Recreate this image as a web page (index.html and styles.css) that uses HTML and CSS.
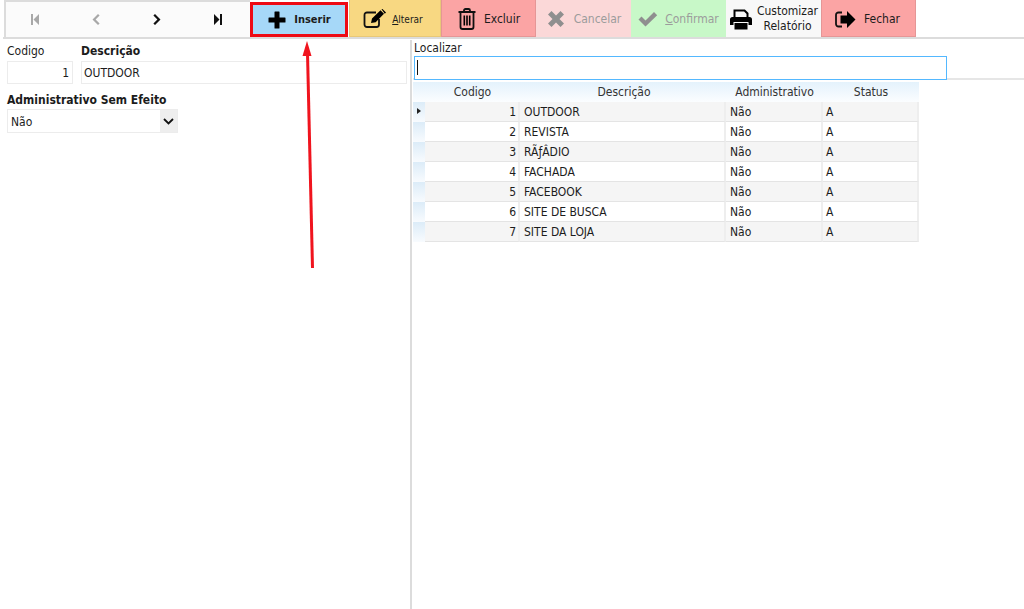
FILE: index.html
```html
<!DOCTYPE html>
<html lang="pt-BR">
<head>
<meta charset="utf-8">
<title>Cadastro</title>
<link rel="stylesheet" href="styles.css">
</head>
<body>
<div class="app">
  <div class="toolbar">
    <div class="nav">
      <button class="navbtn off"><svg width="10" height="11" viewBox="0 0 10 11"><path d="M1 0h2v11H1zM9 0v11L3.500 5.500z"/></svg></button>
      <button class="navbtn off"><svg width="8" height="11" viewBox="0 0 8 11"><path d="M6 0l1.600 1.600L3.600 5.500l4 3.900L6 11 .5 5.500z"/></svg></button>
      <button class="navbtn"><svg width="8" height="11" viewBox="0 0 8 11"><path d="M2 0L.4 1.600l4 3.900-4 3.900L2 11l5.500-5.500z"/></svg></button>
      <button class="navbtn"><svg width="10" height="11" viewBox="0 0 10 11"><path d="M9 0H7v11h2zM1 0v11l5.500-5.500z"/></svg></button>
    </div>
    <button class="btn insert"><svg width="18" height="18" viewBox="0 0 18 18"><path d="M7 .5h4a.5.5 0 0 1 .5.5v5.500H17a.5.5 0 0 1 .5.5v4a.5.5 0 0 1-.5.5h-5.500V17a.5.5 0 0 1-.5.5H7a.5.5 0 0 1-.5-.5v-5.500H1a.5.5 0 0 1-.5-.5V7a.5.5 0 0 1 .5-.5h5.500V1a.5.5 0 0 1 .5-.5z"/></svg><span>Inserir</span></button>
    <button class="btn edit"><svg width="24" height="20" viewBox="0 0 24 20"><path d="M16 10v5.500a2.500 2.500 0 0 1-2.500 2.500H4a2.500 2.500 0 0 1-2.500-2.500V6A2.500 2.500 0 0 1 4 3.500h9" fill="none" stroke="#111" stroke-width="1.800"/><path d="M8 14l1-4.500L17.500 1.200 21 4.700 12.700 13.200zM18.500.3l1-.3 3.500 3.500-1.200 1.200z"/></svg><span><u>A</u>lterar</span></button>
    <button class="btn del"><svg width="18" height="22" viewBox="0 0 18 22"><path d="M.5 4h17M6 4V2.500A1.500 1.500 0 0 1 7.500 1h3A1.500 1.500 0 0 1 12 2.500V4M2.500 4v15a2 2 0 0 0 2 2h9a2 2 0 0 0 2-2V4" fill="none" stroke="#111" stroke-width="1.800"/><path d="M5.500 7.500h1.600v10H5.500zM8.200 7.500h1.600v10H8.200zM10.900 7.500h1.600v10h-1.600z"/></svg><span>Excluir</span></button>
    <button class="btn cancel dim"><svg width="18" height="18" viewBox="0 0 18 18"><path d="M1 4.500L4.500 1 9 5.500 13.500 1 17 4.500 12.500 9l4.500 4.500-3.500 3.500L9 12.500 4.500 17 1 13.500 5.500 9z" fill="#8f8f8f"/></svg><span>Cancelar</span></button>
    <button class="btn ok dim"><svg width="20" height="16" viewBox="0 0 20 16"><path d="M.5 8.500l3-3 4 4L16 1l3.200 3.200L7.500 15.500z" fill="#8f8f8f"/></svg><span><u>C</u>onfirmar</span></button>
    <button class="btn report"><svg width="22" height="21" viewBox="0 0 22 21"><path d="M4.500 8V1.500h10L17.500 4.500V8" fill="none" stroke="#000" stroke-width="2"/><path d="M2.500 8h17A2.500 2.500 0 0 1 22 10.500V16h-3.500v-3h-15v3H0v-5.500A2.500 2.500 0 0 1 2.500 8zM4.500 14h13v6.500h-13z"/></svg><span class="two">Customizar<br>Relatório</span></button>
    <button class="btn close"><svg width="21" height="17" viewBox="0 0 21 17"><path d="M7 1.500H3.500A2.500 2.500 0 0 0 1 4v9a2.500 2.500 0 0 0 2.500 2.500H7" fill="none" stroke="#111" stroke-width="1.800"/><path d="M12 0l8.500 8.500L12 17v-4.500H5.500v-8H12z"/></svg><span>Fechar</span></button>
  </div>
  <div class="panes">
    <section class="left">
      <div class="fields">
        <div class="field code"><label>Codigo</label><div class="input num">1</div></div>
        <div class="field desc"><label class="bold">Descrição</label><div class="input">OUTDOOR</div></div>
      </div>
      <label class="bold admin">Administrativo Sem Efeito</label>
      <div class="select"><span>Não</span><i><svg width="11" height="7" viewBox="0 0 11 7"><path d="M1 1l4.500 4.500L10 1" fill="none" stroke="#111" stroke-width="1.800"/></svg></i></div>
    </section>
    <section class="right">
      <div class="search">
        <label>Localizar</label>
        <div class="find"><b class="caret"></b></div>
      </div>
      <div class="grid">
        <div class="head"><span class="ind"></span><span>Codigo</span><span class="hd">Descrição</span><span>Administrativo</span><span>Status</span></div>
        <div class="row odd"><span class="ind cur"></span><span class="n">1</span><span>OUTDOOR</span><span>Não</span><span class="st">A</span></div>
        <div class="row"><span class="ind"></span><span class="n">2</span><span>REVISTA</span><span>Não</span><span class="st">A</span></div>
        <div class="row odd"><span class="ind"></span><span class="n">3</span><span>RÃƒÂDIO</span><span>Não</span><span class="st">A</span></div>
        <div class="row"><span class="ind"></span><span class="n">4</span><span>FACHADA</span><span>Não</span><span class="st">A</span></div>
        <div class="row odd"><span class="ind"></span><span class="n">5</span><span>FACEBOOK</span><span>Não</span><span class="st">A</span></div>
        <div class="row"><span class="ind"></span><span class="n">6</span><span>SITE DE BUSCA</span><span>Não</span><span class="st">A</span></div>
        <div class="row odd"><span class="ind"></span><span class="n">7</span><span>SITE DA LOJA</span><span>Não</span><span class="st">A</span></div>
      </div>
    </section>
  </div>
  <svg class="arrow" width="16" height="228" viewBox="0 0 16 228"><path d="M7.500 12L12.500 227" stroke="#f0141e" stroke-width="3" fill="none"/><path d="M7 0L11.500 15H2.500z" fill="#f0141e"/></svg>
</div>
</body>
</html>
```
FILE: styles.css
```css
* { box-sizing: border-box; }
html, body { margin: 0; height: 100%; background: #fff; }
body { font-family: "DejaVu Sans Condensed", "DejaVu Sans", sans-serif; font-size: 12px; color: #1c1c1c; overflow: hidden; }
.app { position: relative; width: 1024px; height: 609px; display: flex; flex-direction: column; padding-left: 3px; }
.toolbar { height: 40px; flex: none; display: flex; align-items: stretch; padding: 0 0 3px 1px; background: linear-gradient(#fff 0 37px, #dcdcdc 37px 39px, #fff 39px); }
.nav { width: 246px; display: flex; background: #fbfbfb; border-top: 2px solid #dcdcdc; border-left: 2px solid #dcdcdc; }
.navbtn { flex: 1; border: 0; background: none; padding: 0 3px 0 0; display: flex; align-items: center; justify-content: center; fill: #111; }
.navbtn.off { fill: #a8a8a8; }
.btn { width: 95px; border: 1px solid transparent; border-width: 0 1px 1px; padding: 2px 0 0; margin: 0; display: flex; align-items: center; justify-content: center; gap: 6px; font: inherit; font-size: 12px; color: #1c1c1c; }
.insert { width: 98px; margin: 2px 0 0; border: 3px solid #ee0a14; background: #a6d8f8; gap: 8px; font-weight: bold; font-size: 11px; padding: 0 0 0 1px; }
.edit { width: 92px; margin-left: 1px; background: #f8d882; border-color: #e8c878; font-size: 10px; gap: 5px; padding-right: 4px; }
.del { background: #fba4a4; border-color: #e59696; gap: 8px; padding-left: 1px; }
.cancel { background: #fbd8d8; gap: 9px; padding-left: 1px; }
.ok { background: #c8f8c8; gap: 7px; }
.dim { color: #9c9c9c; }
.report { background: #f8f8f8; gap: 5px; padding-left: 1px; }
.report .two { line-height: 15px; text-align: center; }
.close { background: #fba4a4; border-color: #e59696; gap: 8px; padding-right: 2px; }
.panes { flex: 1; display: flex; min-height: 0; }
.left { width: 407px; flex: none; padding: 3px 3px 0 4px; }
.right { flex: 1; border-left: 2px solid #dcdcdc; padding-left: 1px; min-width: 0; }
label { display: block; line-height: 15px; }
.bold { font-weight: bold; }
.fields { display: flex; gap: 8px; }
.code { width: 66px; }
.desc { flex: 1; }
.fields label { padding-top: 1px; }
.input { height: 23px; margin-top: 2px; border: 1px solid #ececec; line-height: 21px; padding: 1px 2px 0; }
.num { text-align: right; padding-right: 3px; }
.admin { margin-top: 9px; }
.select { width: 171px; height: 24px; margin-top: 1px; border: 1px solid #ececec; display: flex; align-items: center; justify-content: space-between; padding-left: 3px; }
.select span { padding-top: 2px; }
.select i { width: 17px; height: 22px; background: #eeeeee; display: flex; align-items: center; justify-content: center; }
.search { height: 40px; border-bottom: 2px solid #e6e6e6; padding-top: 1px; }
.search label { padding-left: 1px; line-height: 14px; }
.find { width: 533px; height: 24px; margin: 1px 0 0 1px; border: 1px solid #54b8ff; position: relative; background: #fff; }
.caret { position: absolute; left: 2px; top: 3px; width: 1px; height: 15px; background: #111; }
.grid { width: 506px; margin-top: 2px; }
.head, .row { display: grid; grid-template-columns: 12px 95px 206px 97px 96px; }
.head { height: 20px; background: linear-gradient(#e4f2fc, #fbfdff); color: #333; line-height: 20px; text-align: center; }
.hd { padding-left: 2px; }
.row { height: 20px; }
.row > span { height: 20px; line-height: 18px; padding: 1px 3px 0 4px; border-right: 2px solid #eeeeee; border-bottom: 1px solid #e4e4e4; }
.row > span.ind { border: 0; padding: 0; background: linear-gradient(#dcecf8, #f8fbfe); position: relative; }
.row > span.n { text-align: right; padding: 1px 2px 0 0; }
.row > span.st { padding-left: 3px; }
.odd { background: #f5f5f5; }
.cur::after { content: ""; position: absolute; left: 4px; top: 6px; border-left: 4px solid #222; border-top: 3.500px solid transparent; border-bottom: 3.500px solid transparent; }
.arrow { position: absolute; left: 300px; top: 41px; }
```
